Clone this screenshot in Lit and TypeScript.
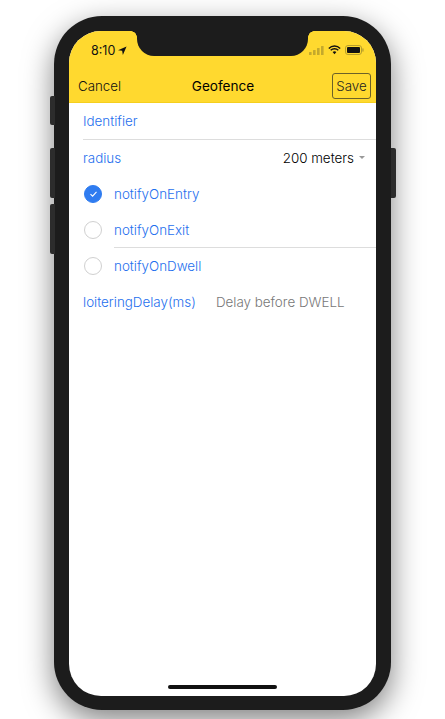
import { LitElement, html, css } from "lit";
import { customElement } from "lit/decorators.js";

@customElement("app-root")
export class AppRoot extends LitElement {
  static styles = css`
    :host { display: block; width: 445px; height: 719px; overflow: hidden; background: #fff; font-family: Inter, "Liberation Sans", sans-serif; }
    .stage { padding: 16px 54px 0; box-sizing: border-box; height: 719px; }
    .phone { position: relative; box-sizing: border-box; width: 337px; height: 694px; padding: 15px 15px 14px; background: #1c1c1c; border-radius: 48px; box-shadow: 0 10px 30px rgba(0,0,0,.5); }
    .btn { position: absolute; background: #2c2c2c; width: 5px; }
    .b1 { left: -4px; top: 80px; height: 29px; border-radius: 2px 0 0 2px; }
    .b2 { left: -4px; top: 132px; height: 50px; border-radius: 2px 0 0 2px; }
    .b3 { left: -4px; top: 188px; height: 50px; border-radius: 2px 0 0 2px; }
    .b4 { right: -5px; top: 132px; height: 50px; border-radius: 0 2px 2px 0; }
    .screen { position: relative; height: 100%; background: #fff; border-radius: 32px; overflow: hidden; display: flex; flex-direction: column; }
    .notch { position: absolute; left: 68px; top: 0; width: 171px; height: 25px; background: #1c1c1c; border-radius: 0 0 17px 17px; }
    .notch::before, .notch::after { content: ""; position: absolute; top: 0; width: 6px; height: 6px; background: radial-gradient(circle at 0 100%, transparent 5.5px, #1c1c1c 6px); }
    .notch::before { left: -6px; }
    .notch::after { right: -6px; transform: scaleX(-1); }
    .head { background: #ffd92f; border-bottom: 1px solid #f5cf1e; height: 72px; box-sizing: border-box; flex: none; }
    .status { display: flex; justify-content: space-between; align-items: center; height: 38px; padding: 0 12px 0 22px; box-sizing: border-box; }
    .left { display: flex; align-items: center; gap: 3px; font-size: 12.5px; font-weight: 400; color: #111; }
    .right { display: flex; align-items: center; gap: 4px; }
    .nav { display: grid; grid-template-columns: 1fr auto 1fr; align-items: center; padding: 0 5px 0 9px; height: 26px; margin-top: 4px; font-size: 13.3px; font-weight: 300; color: #111; }
    .title { font-weight: 400; color: #000; font-size: 13.6px; margin-right: 3px; }
    .save { justify-self: end; border: 1px solid #6b6129; border-radius: 3px; width: 39px; height: 26px; box-sizing: border-box; display: flex; align-items: center; justify-content: center; color: #222; }
    .row { height: 36px; display: flex; align-items: center; box-sizing: border-box; font-size: 13.4px; font-weight: 300; color: #1f70ee; flex: none; }
    .plain { padding-left: 14px; }
    .line { height: 1px; background: #ddd; flex: none; }
    .l1 { margin-left: 14px; }
    .l2 { margin-left: 45px; margin-top: -1px; }
    .check { padding-left: 15px; gap: 12px; }
    .circle { width: 18px; height: 18px; border-radius: 50%; box-sizing: border-box; border: 1px solid #d0d0d0; flex: none; display: flex; align-items: center; justify-content: center; }
    .on { background: #2f7cf0; border-color: #2f7cf0; }
    .value { margin-left: auto; color: #000; padding-right: 11px; display: flex; align-items: center; gap: 5px; }
    .caret { width: 0; height: 0; border-left: 3.5px solid transparent; border-right: 3.5px solid transparent; border-top: 3.5px solid #999; margin-top: -2px; }
    .ph { color: #777; margin-left: 20px; }
    .home { position: absolute; left: 99px; bottom: 7px; width: 109px; height: 4px; background: #111; border-radius: 2px; }
  `;

  render() {
    return html`<div class="stage"><div class="phone">
      <div class="btn b1"></div><div class="btn b2"></div><div class="btn b3"></div><div class="btn b4"></div>
      <div class="screen">
        <div class="head">
          <div class="status">
            <div class="left"><span>8:10</span>
              <svg width="9" height="9" viewBox="0 0 10 10"><path d="M9.5.5 0 4.6l4.6.8.8 4.6z" fill="#111"/></svg>
            </div>
            <div class="right">
              <svg width="15" height="9" viewBox="0 0 15 9" fill="#c4a92c"><rect x="0" y="6" width="2.6" height="3" rx=".5"/><rect x="4" y="4" width="2.6" height="5" rx=".5"/><rect x="8" y="2" width="2.6" height="7" rx=".5"/><rect x="12" y="0" width="2.6" height="9" rx=".5"/></svg>
              <svg width="13" height="10" viewBox="0 0 13 10"><path d="M.8 3.4a8 8 0 0 1 11.4 0M2.7 5.3a5.3 5.3 0 0 1 7.6 0" fill="none" stroke="#111" stroke-width="1.4"/><path d="M4.6 7.1a2.7 2.7 0 0 1 3.8 0L6.5 9.2z" fill="#111"/></svg>
              <svg width="19" height="10" viewBox="0 0 19 10"><rect x=".5" y=".5" width="16" height="9" rx="2.5" fill="none" stroke="#b79e2b"/><rect x="2" y="2" width="13" height="6" rx="1" fill="#111"/><rect x="17.3" y="3.3" width="1.3" height="3.4" rx=".6" fill="#b79e2b"/></svg>
            </div>
          </div>
          <div class="nav"><span>Cancel</span><span class="title">Geofence</span><span class="save">Save</span></div>
        </div>
        <div class="row plain">Identifier</div>
        <div class="line l1"></div>
        <div class="row plain">radius<span class="value">200 meters <span class="caret"></span></span></div>
        <div class="row check"><span class="circle on"><svg width="9" height="8" viewBox="0 0 9 8"><path d="M1.5 4.2 3.6 6.2 7.5 1.8" fill="none" stroke="#fff" stroke-width="1.1"/></svg></span>notifyOnEntry</div>
        <div class="row check"><span class="circle"></span>notifyOnExit</div>
        <div class="line l2"></div>
        <div class="row check"><span class="circle"></span>notifyOnDwell</div>
        <div class="row plain">loiteringDelay(ms)<span class="ph">Delay before DWELL</span></div>
        <div class="notch"></div>
        <div class="home"></div>
      </div>
    </div></div>`;
  }
}
